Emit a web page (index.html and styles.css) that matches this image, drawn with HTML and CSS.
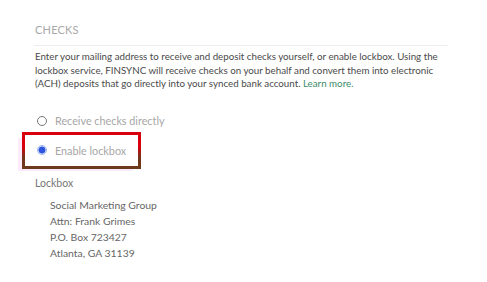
FILE: index.html
```html
<!DOCTYPE html>
<html>
<head>
<meta charset="utf-8">
<link rel="stylesheet" href="styles.css">
</head>
<body>
<div class="panel">
  <h2 class="title">CHECKS</h2>
  <p class="desc">Enter your mailing address to receive and deposit checks yourself, or enable lockbox. Using the lockbox service, FINSYNC will receive checks on your behalf and convert them into electronic (ACH) deposits that go directly into your synced bank account. <a class="link" href="#">Learn more.</a></p>
  <div class="option">
    <span class="radio"></span>
    <span class="option-label">Receive checks directly</span>
  </div>
  <div class="highlight">
    <div class="option option-in">
      <span class="radio radio-on"></span>
      <span class="option-label">Enable lockbox</span>
    </div>
  </div>
  <div class="section-label">Lockbox</div>
  <div class="address">
    <div>Social Marketing Group</div>
    <div>Attn: Frank Grimes</div>
    <div>P.O. Box 723427</div>
    <div>Atlanta, GA 31139</div>
  </div>
</div>
</body>
</html>
```

FILE: styles.css
```css
html, body {
  margin: 0;
  padding: 0;
  background: #ffffff;
}
body {
  font-family: "Lato", "Open Sans", sans-serif;
  color: #444;
}
.panel {
  width: 414px;
  margin-left: 34px;
  padding-top: 23px;
}
.title {
  margin: 0;
  font-size: 11px;
  line-height: 14px;
  font-weight: 400;
  color: #a8a8a8;
  letter-spacing: 0.2px;
  padding-left: 1px;
  padding-bottom: 8px;
  border-bottom: 1px solid #ececec;
}
.desc {
  margin: 4px 0 0 1px;
  font-size: 9.75px;
  line-height: 13.5px;
  color: #4a4a4a;
}
.link {
  color: #3d8b6b;
  text-decoration: none;
}
.option {
  display: flex;
  align-items: center;
  height: 20px;
  margin-top: 20px;
  padding-left: 3px;
  gap: 8px;
}
.option-in {
  margin-top: 0;
  padding-left: 0;
  height: 31px;
}
.radio {
  box-sizing: border-box;
  width: 10px;
  height: 10px;
  border-radius: 50%;
  border: 1px solid #777;
  background: #fff;
  flex: none;
}
.radio-on {
  border: 1.5px solid #9db6ee;
  background: radial-gradient(circle, #2f55e0 0, #2f55e0 3.2px, #dbe5fb 3.8px);
}
.option-label {
  font-size: 10.8px;
  color: #a6a6a6;
}
.highlight {
  width: 101px;
  margin-top: 1px;
  margin-left: -12px;
  padding-left: 12px;
  border: 3px solid;
  border-image: linear-gradient(#d8000c 0%, #d8000c 40%, #74331c 70%, #6e3a1c 100%) 1;
  box-shadow: -6px 4px 0 -2px #fdeafc;
}
.section-label {
  margin-top: 7px;
  font-size: 10.5px;
  line-height: 14px;
  color: #767676;
  padding-left: 1px;
}
.address {
  margin-top: 7px;
  padding-left: 16px;
  font-size: 10.4px;
  line-height: 16px;
  color: #666;
}
```
